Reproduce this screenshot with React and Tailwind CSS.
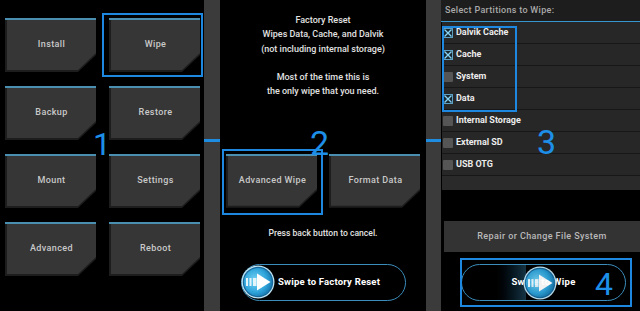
import React from "react";

const menu = ["Install", "Wipe", "Backup", "Restore", "Mount", "Settings", "Advanced", "Reboot"];

const partitions = [
  { name: "Dalvik Cache", checked: true },
  { name: "Cache", checked: true },
  { name: "System", checked: false },
  { name: "Data", checked: true },
  { name: "Internal Storage", checked: false },
  { name: "External SD", checked: false },
  { name: "USB OTG", checked: false },
];

function TwButton({ label, selected, frameClass }) {
  return (
    <div className="relative">
      <div className="flex h-[54px] w-[91px] flex-col border-t-2 border-[#4b8fb0] bg-[#1d1d1d] [clip-path:polygon(0_0,100%_0,100%_37px,73px_100%,0_100%)]">
        <div className="mb-[2px] ml-[2px] flex flex-1 items-center justify-center bg-[#363636] [clip-path:polygon(0_0,100%_0,100%_33px,71px_100%,0_100%)]">
          <span className="text-[9px] font-medium tracking-[0.4px] text-[#c9c9c9]">{label}</span>
        </div>
      </div>
      {selected && <div className={`pointer-events-none absolute border-2 border-[#1e88e0] ${frameClass}`} />}
    </div>
  );
}

function Separator({ width }) {
  return (
    <div className={`${width} shrink-0 bg-[#3b3b3b] pt-[139px]`}>
      <div className="h-[3px] bg-[#1e8ce0]" />
    </div>
  );
}

function Knob({ id }) {
  return (
    <svg width="34" height="34" viewBox="0 0 34 34">
      <defs>
        <radialGradient id={id} cx="40%" cy="45%" r="65%">
          <stop offset="0" stopColor="#7ad6f6" />
          <stop offset="0.65" stopColor="#2ea3da" />
          <stop offset="1" stopColor="#1472a8" />
        </radialGradient>
      </defs>
      <circle cx="17" cy="17" r="16.5" fill="#bfe4f3" />
      <circle cx="17" cy="17" r="15.2" fill="#17679a" />
      <circle cx="17" cy="17" r="14" fill={`url(#${id})`} />
      <rect x="5" y="13" width="2" height="8" fill="#e3f4fb" />
      <rect x="8.5" y="13" width="2" height="8" fill="#e3f4fb" />
      <rect x="12" y="13" width="3.5" height="8" fill="#e3f4fb" />
      <polygon points="16,8.5 29.5,17 16,25.5" fill="#ffffff" />
    </svg>
  );
}

function CheckBox({ checked }) {
  if (!checked) return <div className="h-[10px] w-[10px] shrink-0 rounded-[1px] bg-[#555555]" />;
  return (
    <svg width="10" height="10" viewBox="0 0 10 10" className="shrink-0">
      <rect x="0.5" y="0.5" width="9" height="9" fill="#17262f" stroke="#5d9fc2" />
      <path d="M1.5 1.5 L8.5 8.5 M8.5 1.5 L1.5 8.5" stroke="#86d3f5" strokeWidth="1.4" />
    </svg>
  );
}

export default function App() {
  return (
    <div className="relative flex h-[311px] w-[640px] overflow-hidden bg-black font-['Roboto',sans-serif]">
      {/* main menu */}
      <div className="w-[204px] shrink-0 pl-[5px] pt-[18px]">
        <div className="grid grid-cols-[91px_91px] gap-x-[13px] gap-y-[14px]">
          {menu.map((m) => (
            <TwButton
              key={m}
              label={m}
              selected={m === "Wipe"}
              frameClass="-left-[7px] -right-[3px] -top-[5px] -bottom-[5px]"
            />
          ))}
        </div>
      </div>

      <Separator width="w-[16px]" />

      {/* wipe page */}
      <div className="w-[206px] shrink-0 pt-[13px]">
        <div className="text-center text-[9px] font-medium leading-[14.3px] text-[#e2e2e2]">
          <div>Factory Reset</div>
          <div>Wipes Data, Cache, and Dalvik</div>
          <div>(not including internal storage)</div>
          <div>&nbsp;</div>
          <div>Most of the time this is</div>
          <div>the only wipe that you need.</div>
        </div>
        <div className="mt-[55px] flex gap-[12px] pl-[6px]">
          <TwButton label="Advanced Wipe" selected frameClass="-left-[4px] -right-[6px] -top-[5px] -bottom-[7px]" />
          <TwButton label="Format Data" />
        </div>
        <div className="mt-[18px] text-center text-[8.6px] font-medium leading-[14px] text-[#e2e2e2]">
          Press back button to cancel.
        </div>
        <div className="ml-[21px] mt-[24px] flex h-[37px] w-[165px] items-center rounded-full border-[1.5px] border-[#3b8dbb] bg-black">
          <div className="-ml-[1px]">
            <Knob id="knob-a" />
          </div>
          <span className="ml-[3px] text-[9.5px] font-bold tracking-[0.2px] text-white">Swipe to Factory Reset</span>
        </div>
      </div>

      <Separator width="w-[15px]" />

      {/* advanced wipe */}
      <div className="relative flex-1">
        <div className="flex h-[21px] items-center bg-[#1d1d1d] pl-[4px] text-[9px] font-medium tracking-[0.3px] text-[#a9a9a9]">
          Select Partitions to Wipe:
        </div>
        <div className="h-px bg-[#3596d0]" />
        <div className="ml-[1px]">
          {partitions.map((p) => (
            <div key={p.name} className="flex h-[22px] items-center gap-[3px] border-b border-[#171717] bg-[#272727] pl-[1px]">
              <CheckBox checked={p.checked} />
              <span className="text-[9px] font-bold text-[#ececec]">{p.name}</span>
            </div>
          ))}
          <div className="h-[14px] bg-[#2a2a2a]" />
        </div>
        <div className="ml-[3px] mt-[31px] flex h-[31px] items-center justify-center bg-[#333333] text-[9px] font-medium tracking-[0.4px] text-[#b9b9b9]">
          Repair or Change File System
        </div>
        <div className="relative ml-[20px] mt-[12px] flex h-[37px] w-[165px] items-center justify-center rounded-full border-[1.5px] border-[#3b8dbb] bg-black">
          <div className="absolute left-[28px] top-0 h-full w-[36px] bg-gradient-to-r from-black to-[#163444]" />
          <span className="relative text-[9.5px] font-bold tracking-[0.3px] text-white">Swipe to Wipe</span>
          <div className="absolute left-[61px] top-[0.5px] opacity-95">
            <Knob id="knob-b" />
          </div>
          <div className="pointer-events-none absolute -bottom-[7px] -left-[2px] -right-[7px] -top-[7px] border-2 border-[#1e88e0]" />
        </div>
        <div className="pointer-events-none absolute left-[1px] top-[26px] h-[86px] w-[75px] border-2 border-[#1e88e0]" />
      </div>

      {/* step numbers */}
      <div className="pointer-events-none absolute left-[93px] top-[128px] text-[32px] leading-[32px] text-[#1e8fe8]">1</div>
      <div className="pointer-events-none absolute left-[310px] top-[126px] text-[34px] leading-[34px] text-[#1e8fe8]">2</div>
      <div className="pointer-events-none absolute left-[537px] top-[125px] text-[34px] leading-[34px] text-[#1e8fe8]">3</div>
      <div className="pointer-events-none absolute left-[595px] top-[268px] text-[32px] leading-[32px] text-[#1e8fe8]">4</div>
    </div>
  );
}
